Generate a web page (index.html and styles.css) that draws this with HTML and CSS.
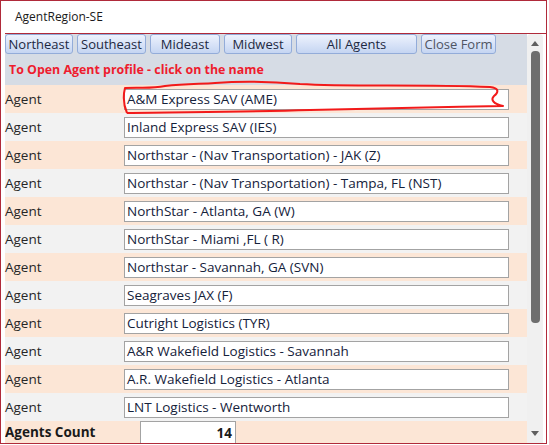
FILE: index.html
```html
<!DOCTYPE html>
<html>
<head>
<meta charset="utf-8">
<link rel="stylesheet" href="styles.css">
</head>
<body>
<div class="window">
  <div class="titlebar">AgentRegion-SE</div>
  <div class="form">
    <div class="content">
      <div class="header">
        <div class="buttons">
          <div class="btn w68">Northeast</div>
          <div class="btn w69">Southeast</div>
          <div class="btn w70">Mideast</div>
          <div class="btn w68">Midwest</div>
          <div class="btn w121">All Agents</div>
          <div class="btn w75 btn-muted">Close Form</div>
        </div>
        <div class="hint">To Open Agent profile - click on the name</div>
      </div>
      <div class="rows">
        <div class="row peach"><span class="label">Agent</span><div class="box">A&amp;M Express SAV (AME)</div></div>
        <div class="row gray"><span class="label">Agent</span><div class="box">Inland Express SAV (IES)</div></div>
        <div class="row peach"><span class="label">Agent</span><div class="box">Northstar - (Nav Transportation) - JAK (Z)</div></div>
        <div class="row gray"><span class="label">Agent</span><div class="box">Northstar - (Nav Transportation) - Tampa, FL (NST)</div></div>
        <div class="row peach"><span class="label">Agent</span><div class="box">NorthStar - Atlanta, GA (W)</div></div>
        <div class="row gray"><span class="label">Agent</span><div class="box">NorthStar - Miami ,FL ( R)</div></div>
        <div class="row peach"><span class="label">Agent</span><div class="box">Northstar - Savannah, GA (SVN)</div></div>
        <div class="row gray"><span class="label">Agent</span><div class="box">Seagraves JAX (F)</div></div>
        <div class="row peach"><span class="label">Agent</span><div class="box">Cutright Logistics (TYR)</div></div>
        <div class="row gray"><span class="label">Agent</span><div class="box">A&amp;R Wakefield Logistics - Savannah</div></div>
        <div class="row peach"><span class="label">Agent</span><div class="box">A.R. Wakefield Logistics - Atlanta</div></div>
        <div class="row gray"><span class="label">Agent</span><div class="box">LNT Logistics - Wentworth</div></div>
      </div>
      <div class="footer">
        <span class="count-label">Agents Count</span>
        <div class="count-box">14</div>
      </div>
    </div>
    <div class="scrollbar">
      <div class="arrow up"></div>
      <div class="track"><div class="thumb"></div></div>
      <div class="arrow down"></div>
    </div>
  </div>
</div>
<svg class="scribble" width="549" height="445" viewBox="0 0 549 445">
  <path d="M127,113 C124,106 123,96 125,88 C140,87 150,89 165,86 C185,84 200,84 215,83 C240,81 265,81 300,84 C350,87 420,84 490,87 C499,88 499,92 494,96 C490,100 494,104 503,106 C440,107 380,108 310,110 C250,112 185,112 127,113" fill="none" stroke="#f21a1a" stroke-width="2" stroke-linejoin="round"/>
</svg>
</body>
</html>
```
FILE: styles.css
```css
html, body {
  margin: 0;
  padding: 0;
  background: #ffffff;
}
body {
  width: 549px;
  height: 445px;
  overflow: hidden;
  font-family: "Open Sans", "Noto Sans", sans-serif;
}
.window {
  width: 545px;
  height: 442px;
  border: 1px solid #b02a3a;
  background: #ffffff;
  display: flex;
  flex-direction: column;
}
.titlebar {
  height: 32px;
  padding-left: 14px;
  font-size: 12px;
  line-height: 32px;
  color: #1a1a1a;
}
.form {
  margin-left: 4px;
  height: 409px;
  border-top: 1px solid #b02a3a;
  display: flex;
  padding-right: 3px;
}
.content {
  width: 522px;
  display: flex;
  flex-direction: column;
}
.header {
  height: 51px;
  background: #d6dce5;
  display: flex;
  flex-direction: column;
}
.buttons {
  display: flex;
  gap: 4px;
}
.btn {
  height: 18px;
  border: 1px solid #93acd9;
  border-radius: 3px;
  background: linear-gradient(#edf2fd, #c5d5f2);
  font-size: 13px;
  line-height: 18px;
  text-align: center;
  color: #1d2942;
  box-sizing: content-box;
}
.btn-muted { color: #4f5563; }
.w68 { width: 66px; }
.w69 { width: 67px; }
.w70 { width: 68px; }
.w121 { width: 119px; }
.w75 { width: 73px; }
.hint {
  flex: 1;
  display: flex;
  align-items: center;
  padding-left: 4px;
  font-size: 12.4px;
  font-weight: bold;
  color: #ee1c2e;
}
.rows {
  display: flex;
  flex-direction: column;
}
.row {
  height: 28px;
  display: flex;
  align-items: center;
}
.peach { background: #fce6d6; }
.gray { background: #f2f2f2; }
.label {
  width: 119px;
  font-size: 13.5px;
  color: #262626;
}
.box {
  width: 381px;
  height: 19px;
  margin-top: 1px;
  border: 1px solid #a3a3a3;
  background: #ffffff;
  padding-left: 2px;
  font-size: 13.5px;
  line-height: 19px;
  color: #14213a;
  white-space: nowrap;
  overflow: hidden;
}
.footer {
  flex: 1;
  background: #fce6d6;
  display: flex;
  overflow: hidden;
}
.count-label {
  width: 135px;
  font-size: 13.5px;
  font-weight: bold;
  color: #1a1a1a;
  line-height: 22px;
}
.count-box {
  width: 91px;
  height: 21px;
  border: 1px solid #a3a3a3;
  border-bottom: none;
  background: #ffffff;
  padding-right: 3px;
  text-align: right;
  font-size: 13.5px;
  font-weight: bold;
  line-height: 22px;
  color: #1a1a1a;
}
.scrollbar {
  width: 16px;
  background: #f0f0f0;
  border-radius: 4px 4px 0 0;
  display: flex;
  flex-direction: column;
  align-items: center;
}
.arrow {
  width: 0;
  height: 0;
  border-left: 4px solid transparent;
  border-right: 4px solid transparent;
}
.arrow.up {
  margin-top: 7px;
  border-bottom: 5px solid #5f5f5f;
}
.arrow.down {
  margin-bottom: 7px;
  border-top: 5px solid #5f5f5f;
}
.track {
  flex: 1;
  width: 100%;
  display: flex;
  justify-content: center;
}
.thumb {
  margin-top: 5px;
  width: 9px;
  height: 272px;
  border-radius: 4px;
  background: #6e6e6e;
}
.scribble {
  position: absolute;
  left: 0;
  top: 0;
  pointer-events: none;
}
```
